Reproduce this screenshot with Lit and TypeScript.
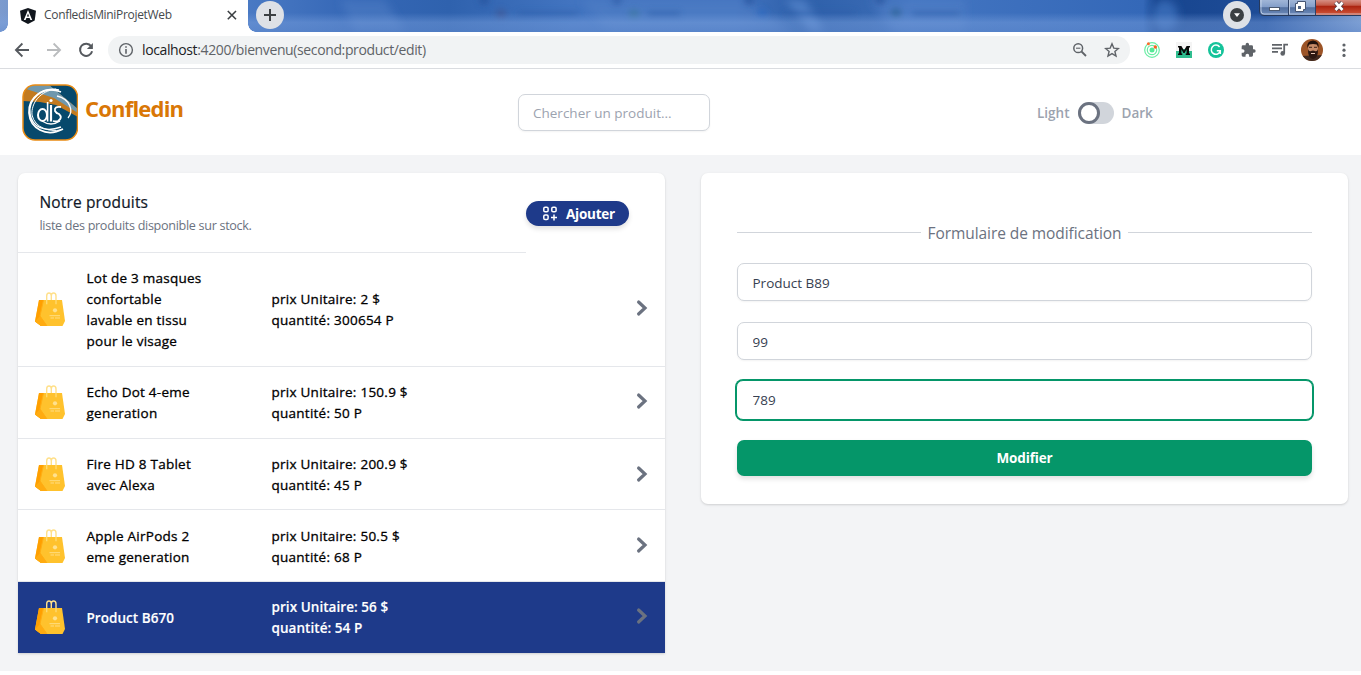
import { LitElement, html, css, svg } from "lit";
import { customElement } from "lit/decorators.js";
import { classMap } from "lit/directives/class-map.js";

interface Product {
  name: string[];
  price: string;
  quantity: string;
  selected?: boolean;
}

const PRODUCTS: Product[] = [
  { name: ["Lot de 3 masques", "confortable", "lavable en tissu", "pour le visage"], price: "2", quantity: "300654" },
  { name: ["Echo Dot 4-eme", "generation"], price: "150.9", quantity: "50" },
  { name: ["Fire HD 8 Tablet", "avec Alexa"], price: "200.9", quantity: "45" },
  { name: ["Apple AirPods 2", "eme generation"], price: "50.5", quantity: "68" },
  { name: ["Product B670"], price: "56", quantity: "54", selected: true },
];

@customElement("browser-chrome")
class BrowserChrome extends LitElement {
  static styles = css`
    :host { display: block; height: 69px; font-family: "Open Sans", "Noto Sans", sans-serif; }
    * { box-sizing: border-box; }
    svg { display: block; flex: none; }
    .strip { position: relative; height: 32px; display: flex; overflow: hidden; background: #3c6cb6; }
    .glass { position: absolute; left: 0; top: 0; }
    .tab { position: relative; width: 240px; margin-left: 8px; height: 32px; background: #fff; display: flex; align-items: center; padding-left: 12px; }
    .tab::before, .tab::after { content: ""; position: absolute; bottom: 0; width: 8px; height: 8px; }
    .tab::before { left: -8px; background: radial-gradient(circle at 0 0, transparent 7.5px, #fff 8px); }
    .tab::after { right: -8px; background: radial-gradient(circle at 100% 0, transparent 7.5px, #fff 8px); }
    .title { margin-left: 8px; width: 180px; font-size: 12px; line-height: 16px; letter-spacing: -0.32px; color: #45494d; padding-bottom: 2px; }
    .round { position: relative; width: 28px; height: 28px; border-radius: 50%; background: #dee1e6; display: flex; align-items: center; justify-content: center; margin: 1px 0 0 8px; }
    .menu { margin: 1px 8px 0 auto; }
    .win { position: relative; }
    .bar { height: 37px; display: flex; align-items: center; background: #fff; border-bottom: 1px solid #dadce0; padding-left: 14px; }
    .bar > svg + svg { margin-left: 16px; }
    .omni { width: 1022px; height: 28px; border-radius: 14px; background: #f1f3f4; margin-left: 14px; display: flex; align-items: center; padding: 0 10px; }
    .url { margin-left: 8px; font-size: 14px; line-height: 20px; letter-spacing: -0.38px; color: #5f6368; white-space: nowrap; flex: 1; }
    .host { color: #202124; }
    .omni svg + svg { margin-left: 16px; }
    .ext { display: flex; align-items: center; gap: 16px; margin-left: 14px; }
    .ext .face { margin: 0 3px 0 -3px; }
  `;

  render() {
    return html`
      <div class="strip">
        <svg class="glass" width="1361" height="32" viewBox="0 0 1361 32">
          <defs>
            <linearGradient id="base">
              <stop offset="0" stop-color="#7c9bce" /><stop offset=".02" stop-color="#6f93cb" />
              <stop offset=".18" stop-color="#4a7ac4" /><stop offset=".26" stop-color="#3567b6" />
              <stop offset=".33" stop-color="#2f62ae" /><stop offset=".42" stop-color="#4274c0" />
              <stop offset=".54" stop-color="#4273bf" /><stop offset=".59" stop-color="#2e60aa" />
              <stop offset=".64" stop-color="#3768b2" /><stop offset=".67" stop-color="#4375c1" />
              <stop offset=".84" stop-color="#3468b8" /><stop offset=".85" stop-color="#17458f" />
              <stop offset=".93" stop-color="#1e4c97" /><stop offset="1" stop-color="#7d9ccb" />
            </linearGradient>
            <linearGradient id="low" x2="0" y2="1">
              <stop offset=".4" stop-color="#7ca2df" stop-opacity="0" />
              <stop offset=".7" stop-color="#7ca2df" stop-opacity=".45" />
              <stop offset="1" stop-color="#6790d2" stop-opacity=".55" />
            </linearGradient>
            <filter id="soft"><feGaussianBlur stdDeviation="4" /></filter>
            <filter id="tiny" x="-10%" y="-100%" width="120%" height="300%"><feGaussianBlur stdDeviation="3" /></filter>
          </defs>
          <rect width="1361" height="32" fill="url(#base)" />
          <g filter="url(#soft)">
            <path d="M340 0H385L405 32H355Z" fill="#5482c8" opacity=".5" />
            <path d="M580 0H745L790 32H610Z" fill="#5481c8" opacity=".5" />
            <path d="M785 0H805L825 32H810Z" fill="#5d8ad0" opacity=".7" />
            <path d="M870 0H965V32H895Z" fill="#5180c8" opacity=".6" />
            <ellipse cx="1165" cy="16" rx="13" ry="16" fill="#3668b4" />
          </g>
          <g filter="url(#tiny)" opacity=".6">
            <circle cx="484" cy="0" r="5" fill="#224d97" /><circle cx="617" cy="0" r="5" fill="#2b58a3" />
            <circle cx="749" cy="0" r="5" fill="#224d97" /><circle cx="880" cy="0" r="5" fill="#224d97" />
            <circle cx="501" cy="14" r="5" fill="#42538d" /><circle cx="634" cy="14" r="5" fill="#387798" />
            <circle cx="762" cy="13" r="5" fill="#2665c0" /><circle cx="896" cy="13" r="5" fill="#235b88" />
            <path d="M518 14H578M648 14H680M785 14H855M912 14H960" stroke="#2b5da8" stroke-width="5" />
          </g>
          <rect width="1361" height="32" fill="url(#low)" />
        </svg>
        <div class="tab">
          <svg width="16" height="16" viewBox="0 0 16 16">
            <path d="M8 0L16 2.8L14.7 12.6L8 16L1.3 12.6L0 2.8Z" fill="#11161d" />
            <path d="M8 2.1L3.8 12H5.6L6.4 9.9H9.6L10.4 12H12.2ZM8 5.5L9.1 8.4H6.9Z" fill="#fff" fill-rule="evenodd" />
          </svg>
          <span class="title">ConfledisMiniProjetWeb</span>
          <svg width="16" height="16" viewBox="0 0 16 16" stroke="#3c4043" stroke-width="1.6"><path d="M3.8 3L12 11.2M12 3L3.8 11.2" /></svg>
        </div>
        <div class="round"><svg width="14" height="14" stroke="#3c4043" stroke-width="2"><path d="M1 7H13M7 1V13" /></svg></div>
        <div class="round menu"><svg width="14" height="14"><circle cx="7" cy="7" r="7" fill="#3c4043" /><path d="M4 5.3H10L7 9Z" fill="#fff" /></svg></div>
        <svg class="win" width="102" height="18" viewBox="0 0 102 18">
          <defs>
            <linearGradient id="btn" x2="0" y2="1"><stop offset="0" stop-color="#a5b9d9" /><stop offset=".5" stop-color="#829dc9" /><stop offset=".52" stop-color="#526f9f" /><stop offset="1" stop-color="#6f8dbc" /></linearGradient>
            <linearGradient id="red" x2="0" y2="1"><stop offset="0" stop-color="#d68f83" /><stop offset=".35" stop-color="#c35a47" /><stop offset=".42" stop-color="#ac2410" /><stop offset="1" stop-color="#d2583b" /></linearGradient>
          </defs>
          <path d="M.5 -1V11Q.5 15.5 5 15.5H103V-1Z" fill="url(#btn)" />
          <rect x="57" width="46" height="15" fill="url(#red)" />
          <path d="M.5 -1V11Q.5 15.5 5 15.5H103" fill="none" stroke="#26395c" />
          <path d="M2 0V11Q2 14 5 14H102" fill="none" stroke="#d8e2f2" opacity=".7" />
          <path d="M29.5 0V15M56.5 0V15" stroke="#2e4267" />
          <path d="M30.5 0V14" stroke="#bdcbe2" />
          <rect x="10.5" y="7.5" width="10" height="3" fill="#fff" stroke="#4b5970" />
          <path d="M38.5 1.5H46.5V9.5H44.5V11.5H36.5V3.5H38.5Z" fill="#fff" stroke="#455573" />
          <rect x="39" y="6" width="3" height="3" fill="#506383" />
          <path d="M76.500 2.500L83.500 10M83.500 2.500L76.500 10" stroke="#503d47" stroke-width="4.2" />
          <path d="M76.500 2.500L83.500 10M83.500 2.500L76.500 10" stroke="#fff" stroke-width="2.7" />
        </svg>
      </div>
      <div class="bar">
        <svg width="16" height="16" viewBox="0 0 16 16" fill="none" stroke="#55595e" stroke-width="1.8"><path d="M15 8H2.2M8.4 1.5L1.9 8L8.4 14.5" /></svg>
        <svg width="16" height="16" viewBox="0 0 16 16" fill="none" stroke="#babcbe" stroke-width="1.8"><path d="M1 8H13.8M7.6 1.5L14.1 8L7.6 14.5" /></svg>
        <svg width="16" height="16" viewBox="0 0 16 16"><path d="M13.2 4.3A6.1 6.1 0 1 0 14.1 9.2" fill="none" stroke="#55595e" stroke-width="2" /><path d="M14.9 1V7H8.9Z" fill="#55595e" /></svg>
        <div class="omni">
          <svg width="16" height="16" viewBox="0 0 16 16" fill="none" stroke="#5f6368" stroke-width="1.4"><circle cx="8" cy="8" r="6.4" /><path d="M8 7V11.7M8 4.2V5.8" stroke-width="1.6" /></svg>
          <span class="url"><span class="host">localhost</span>:4200/bienvenu(second:product/edit)</span>
          <svg width="16" height="16" viewBox="0 0 16 16" fill="none" stroke="#5f6368" stroke-width="1.5"><circle cx="6.2" cy="6.2" r="4.4" /><path d="M9.5 9.5L14 14" stroke-width="1.8" /><path d="M4 6.2H8.4" stroke-width="1.1" /></svg>
          <svg width="16" height="16" viewBox="0 0 16 16" fill="none" stroke="#5f6368" stroke-width="1.4"><path d="M8 1.8L9.8 6.1L14.4 6.5L10.9 9.5L12 14L8 11.6L4 14L5.1 9.5L1.6 6.5L6.2 6.1Z" /></svg>
        </div>
        <div class="ext">
          <svg width="16" height="16" viewBox="0 0 16 16" fill="none"><circle cx="8" cy="8" r="7.3" stroke="#69eda4" stroke-width="1.2" /><circle cx="8" cy="8" r="4.7" stroke="#69eda4" stroke-width="1.2" /><circle cx="8" cy="8" r="2.5" fill="#55e996" /><circle cx="4.4" cy="1.8" r="1.5" fill="#ff6b2d" /><circle cx="11.3" cy="5" r="1.7" fill="#ff5d1c" /></svg>
          <svg width="16" height="16" viewBox="0 0 16 16"><rect width="16" height="16" fill="#f4f4f4" /><path d="M0 9H3V7H13V9H16V16H0Z" fill="#2fbd8f" /><path d="M2 4H5.4L8 8.600L10.6 4H14V5.500H13V11.500H14V13H9.7V11.500H10.6V7.300L8.6 11H7.4L5.4 7.300V11.500H6.3V13H2V11.500H3V5.500H2Z" fill="#080808" /></svg>
          <svg width="16" height="16" viewBox="0 0 16 16"><circle cx="8" cy="8" r="8" fill="#15c39a" /><path d="M11.6 5A4.6 4.6 0 1 0 12.3 9M8.8 8.7H12.3V12" fill="none" stroke="#fff" stroke-width="1.5" /></svg>
          <svg width="16" height="16" viewBox="0 0 24 24"><path d="M21 11h-1.500V7a2 2 0 0 0-2-2h-4V3.500a2.500 2.500 0 0 0-5 0V5h-4a2 2 0 0 0-2 2v3.800H4c1.500 0 2.700 1.200 2.700 2.700S5.500 16.200 4 16.200H2.500V20a2 2 0 0 0 2 2h3.800v-1.500c0-1.500 1.200-2.700 2.700-2.700s2.700 1.200 2.700 2.700V22h3.800a2 2 0 0 0 2-2v-4H21a2.500 2.500 0 0 0 0-5z" fill="#5f6368" /></svg>
          <svg width="16" height="16" viewBox="0 0 16 16"><path d="M0 2.8H10M0 6.300H10M0 9.800H6" stroke="#5f6368" stroke-width="1.7" /><path d="M12.200 11.500V2.700H16" fill="none" stroke="#5f6368" stroke-width="1.800" /><circle cx="10.700" cy="11.400" r="2.300" fill="#5f6368" /></svg>
          <svg class="face" width="22" height="22" viewBox="0 0 22 22">
            <clipPath id="face"><circle cx="11" cy="11" r="11" /></clipPath>
            <g clip-path="url(#face)"><rect width="22" height="22" fill="#9c5427" /><path d="M0 17L22 16V22H0Z" fill="#3f2920" /><ellipse cx="12" cy="10.500" rx="5" ry="7" fill="#c68b69" /><path d="M6.500 9Q5 2 12 1.500Q18.500 2 17.500 9L16 5.500Q12 4.500 8 5.500Z" fill="#20110d" /><path d="M7 10Q8 13 10 12Q12 11 14 12Q16 13 17 10Q17.500 19 12 20Q6.500 19 7 10Z" fill="#2c1812" /><path d="M8 8.300H11M13 8.300H16" stroke="#5a3828" stroke-width="1.200" /><path d="M10 14.500H14" stroke="#e6c7b5" /></g>
          </svg>
          <svg width="4" height="16" viewBox="0 0 4 16" fill="#5f6368"><circle cx="2" cy="3" r="1.600" /><circle cx="2" cy="8.200" r="1.600" /><circle cx="2" cy="13.400" r="1.600" /></svg>
        </div>
      </div>`;
  }
}

const bag = svg`
  <path d="M11.700 12V4Q11.700 1 14 1Q16.300 1 16.300 4V9M16.300 4Q16.300 1 18.600 1Q21 1 21 4V12" fill="none" stroke="#ffe08a" stroke-width="1.400"/>
  <path d="M4 8H27L30 29L27.500 34H6L0 29.500Z" fill="#ffc22d"/>
  <path d="M4 8L8.500 8L5 24L12 34H6L0 29.500Z" fill="#ff9f00"/>
  <path d="M5 24L12 34H6L0 29.500Z" fill="#ffab10"/>
  <path d="M8.500 8L5 24L12 34" fill="none" stroke="#ffae14" stroke-width="1"/>
  <path d="M11.700 8V12.300M21 8V12.300" stroke="#ffd96f" stroke-width="1.400"/>
  <circle cx="20" cy="18.300" r="2.100" fill="#ffe18f"/>
  <path d="M14.500 23.700H25M15.500 26H19M20 26H25" stroke="#ffe18f" stroke-width=".9"/>`;

@customElement("product-row")
class ProductRow extends LitElement {
  static properties = { product: { attribute: false } };
  declare product: Product;

  static styles = css`
    :host { display: block; }
    .row { height: 100%; display: grid; grid-template-columns: 30px 206px 1fr 12px; align-items: center; padding: 0 17px; color: #000; font-size: 13.5px; line-height: 21px; white-space: nowrap; letter-spacing: 0.25px; -webkit-text-stroke: 0.3px currentColor; }
    .selected { background: #1e3a8a; color: #fff; font-weight: 600; letter-spacing: 0.05px; -webkit-text-stroke: 0.15px currentColor; }
    .name { padding-left: 21.5px; }
    .info { padding-left: 0.5px; }
    .selected .name { padding-top: 2px; }
    svg { display: block; margin-bottom: 2px; }
    .chev { color: #6b7280; margin-bottom: 3px; }
  `;

  render() {
    const p = this.product;
    return html`<div class=${classMap({ row: true, selected: !!p.selected })}>
      <svg width="30" height="34" viewBox="0 0 30 34">${bag}</svg>
      <div class="name">${p.name.map((line) => html`<div>${line}</div>`)}</div>
      <div class="info"><div>prix Unitaire: ${p.price} $</div><div>quantité: ${p.quantity} P</div></div>
      <svg class="chev" width="12" height="18" viewBox="0 0 12 18" fill="none" stroke="currentColor" stroke-width="3.200" stroke-linecap="round"><path d="M2.600 3L9 9L2.600 15" /></svg>
    </div>`;
  }
}

@customElement("app-root")
class AppRoot extends LitElement {
  static styles = css`
    :host { display: block; width: 1361px; height: 675px; overflow: hidden; background: #fff; font-family: "Open Sans", "Noto Sans", sans-serif; }
    * { box-sizing: border-box; }
    svg { display: block; flex: none; }
    .head { height: 86px; display: flex; align-items: flex-start; padding: 14px 0 0 22px; }
    .brand { margin: 8px 0 0 7px; width: 433px; font-size: 22px; line-height: 34px; font-weight: 700; letter-spacing: -0.8px; color: #d97706; }
    .field { height: 38px; border: 1px solid #d1d5db; border-radius: 7px; background: #fff; box-shadow: 0 1px 2px rgba(0,0,0,.05); padding: 1px 15px 0 14.500px; font-family: inherit; font-size: 13.500px; line-height: 20px; color: #374151; outline: none; display: block; width: 100%; }
    .search { width: 192px; height: 37px; margin: 11px 0 0 0; padding: 0 14px; }
    .search::placeholder { color: #9ca3af; opacity: 1; }
    .theme { display: flex; align-items: center; margin: 19px 0 0 327px; gap: 8px; color: #9ca3af; font-size: 13.500px; line-height: 22px; font-weight: 600; }
    .theme span { margin-top: -1px; }
    .track { width: 36px; height: 22px; border-radius: 11px; background: #d1d5db; }
    .knob { width: 22px; height: 22px; border: 3px solid #6b7280; border-radius: 50%; background: #fff; }
    .main { height: 516px; background: #f3f4f6; display: flex; align-items: flex-start; gap: 36px; padding: 18px 13px 0 18px; }
    .card { width: 647px; background: #fff; border-radius: 7px; box-shadow: 0 1px 3px rgba(0,0,0,.1), 0 1px 2px rgba(0,0,0,.06); }
    .list { height: 480px; border-radius: 7px 7px 0 0; }
    .top { height: 80px; display: flex; align-items: flex-start; }
    .intro { width: 508px; height: 80px; border-bottom: 1px solid #e5e7eb; padding: 18px 0 0 21.500px; }
    .h { font-size: 15.500px; line-height: 23px; letter-spacing: 0.15px; color: #111827; -webkit-text-stroke: 0.2px currentColor; }
    .sub { font-size: 12.600px; line-height: 24px; color: #6b7280; letter-spacing: -0.31px; }
    .add { width: 103px; height: 25px; margin-top: 28px; border-radius: 13px; background: #1e3a8a; color: #fff; font-size: 13.500px; line-height: 25px; font-weight: 700; letter-spacing: -0.25px; display: flex; align-items: center; padding-left: 16px; gap: 8px; box-shadow: 0 3px 5px rgba(0,0,0,.12); }
    .add span { padding-top: 1px; }
    product-row { box-sizing: border-box; height: 72px; border-bottom: 1px solid #e5e7eb; }
    .first { height: 114px; }
    .third { height: 71px; }
    .lower { padding-top: 2px; }
    .last { height: 71px; border-bottom: 0; }
    .form { height: 331px; padding: 49px 36px 0; }
    .legend { height: 23px; display: flex; align-items: center; gap: 7px; color: #6b7280; font-size: 15.500px; line-height: 23px; letter-spacing: -0.07px; white-space: nowrap; }
    .legend i { flex: 1; height: 1px; background: #d1d5db; margin-bottom: 2px; }
    .fields { display: grid; row-gap: 21px; margin-top: 18px; }
    .focus { border-color: #059669; box-shadow: 0 0 0 1px #059669; width: 577px; margin: -1px -1px 0; height: 40px; padding: 0 15.500px; }
    .submit { height: 36px; margin-top: 20px; border-radius: 7px; background: #059669; color: #fff; font-size: 13.500px; line-height: 36px; font-weight: 700; text-align: center; letter-spacing: -0.15px; box-shadow: 0 3px 5px rgba(0,0,0,.12); }
  `;

  render() {
    const sizes = ["first", "", "third lower", "lower", "last"];
    return html`
      <browser-chrome></browser-chrome>
      <header class="head">
        <svg width="56" height="58" viewBox="0 -1 56 58">
          <defs><clipPath id="tile"><rect x="1" y="1" width="54.500" height="55" rx="12" /></clipPath></defs>
          <g clip-path="url(#tile)">
            <rect width="56" height="58" fill="#07496c" />
            <path d="M0 0H25L56 24V33L34 21L18 18L0 17Z" fill="#c27a20" />
            <path d="M3 0H26L56 25V29L32 14L1 4Z" fill="#7098ad" />
            <path d="M27 0L56 25V0Z" fill="#07496c" />
          </g>
          <rect x="1" y="1" width="54.500" height="55" rx="12" fill="none" stroke="#e98b13" stroke-width="1.500" />
          <g fill="none" stroke="#fff">
            <path d="M39 8C21 1 6 14 7 29C8 44 24 54 41 45" stroke-width="1.700" />
            <path d="M37 6C19 2 6 16 8 30C10 43 23 49 39 43" stroke-width="1.500" />
            <path d="M34 5C18 7 9 19 10 31C13 44 27 48 39 46" stroke-width="1" />
            <path d="M35 12C48 15 52 27 46 34" stroke-width="1.300" />
            <ellipse cx="20.500" cy="31" rx="4.500" ry="6" stroke-width="2" />
            <path d="M25.600 18V37.500" stroke-width="1.600" />
            <path d="M29 21V37.500" stroke-width="2.200" />
            <path d="M39 23Q32 22 33 27Q34 29 37 30Q41 34 36 37Q34 38 31 37" stroke-width="1.800" />
            <path d="M20 37Q29 43 38 37" stroke-width="1.300" />
          </g>
          <circle cx="29" cy="16.500" r="1.600" fill="#fff" />
        </svg>
        <div class="brand">Confledin</div>
        <input class="field search" placeholder="Chercher un produit..." />
        <div class="theme"><span>Light</span><div class="track"><div class="knob"></div></div><span>Dark</span></div>
      </header>
      <main class="main">
        <section class="card list">
          <div class="top">
            <div class="intro"><div class="h">Notre produits</div><div class="sub">liste des produits disponible sur stock.</div></div>
            <div class="add">
              <svg width="16" height="16" viewBox="0 0 16 16" fill="none" stroke="#fff" stroke-width="1.500"><rect x="1.800" y="1.300" width="4.300" height="4.500" rx="1.300" /><rect x="9.800" y="1.300" width="4.300" height="4.500" rx="1.300" /><rect x="1.800" y="9" width="4.300" height="4.500" rx="1.300" /><path d="M12 8.500V14.500M9 11.500H15" /></svg>
              <span>Ajouter</span>
            </div>
          </div>
          ${PRODUCTS.map((p, i) => html`<product-row class=${sizes[i]} .product=${p}></product-row>`)}
        </section>
        <section class="card form">
          <div class="legend"><i></i><span>Formulaire de modification</span><i></i></div>
          <div class="fields">
            <input class="field" .value=${"Product B89"} />
            <input class="field" .value=${"99"} />
            <input class="field focus" .value=${"789"} />
          </div>
          <div class="submit">Modifier</div>
        </section>
      </main>`;
  }
}
